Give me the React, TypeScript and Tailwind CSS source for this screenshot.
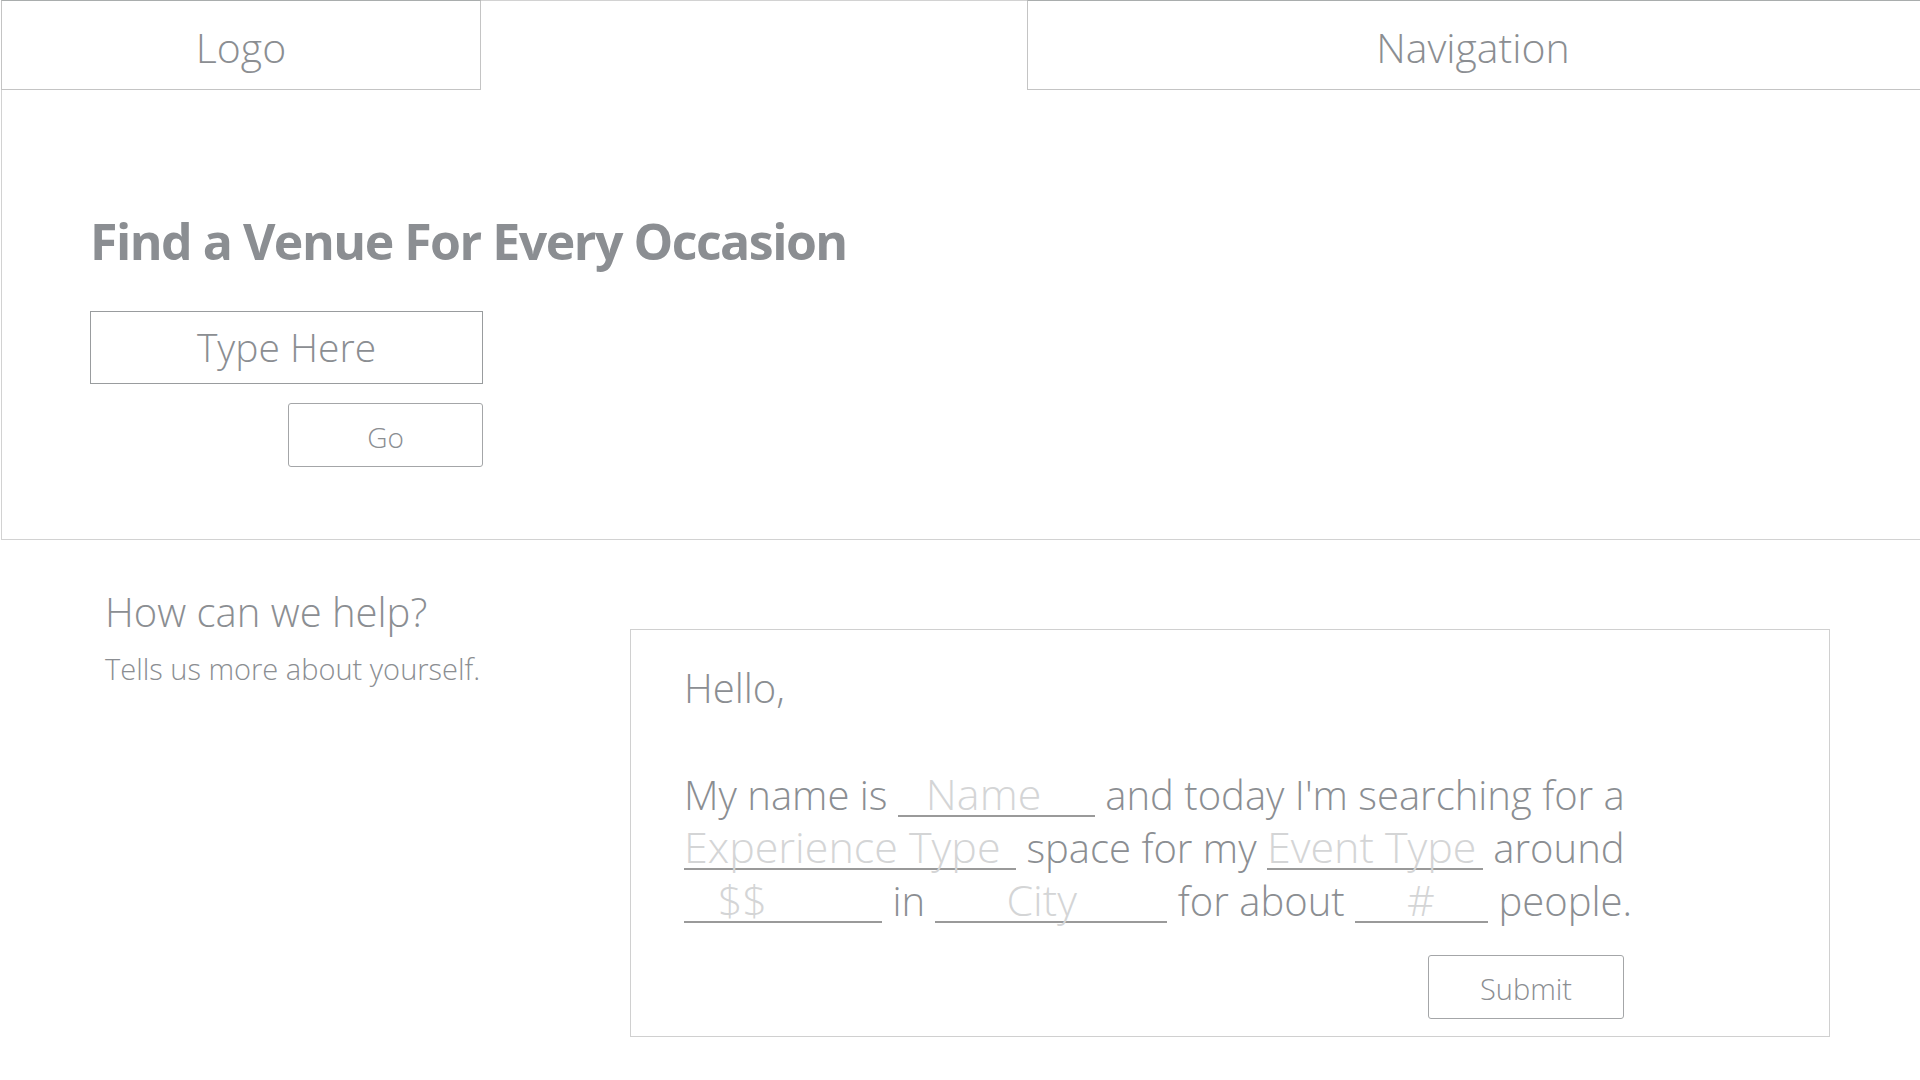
import React from 'react';

const font = { fontFamily: '"Open Sans", "Noto Sans", sans-serif' };

const Blank = ({ label, w, pad }: { label: string; w: string; pad: string }) => (
  <span className={`inline-block leading-none text-[43px] border-b-2 border-[#9a9a9a] text-[#d4d5d6] ${w} ${pad}`}>{label}</span>
);

export default function App() {
  return (
    <div className="w-[1920px] h-[1080px] bg-white text-[#8b8e92] overflow-hidden" style={font}>
      {/* Hero */}
      <section className="h-[540px] ml-[1px] w-[1930px] border border-[#d2d2d2]">
        <header className="flex justify-between -mt-px">
          <div className="w-[480px] h-[90px] -ml-px pt-[6px] border border-[#c4c4c4] border-t-[#a9adad] flex items-center justify-center text-[41px] font-light">
            Logo
          </div>
          <div className="w-[903px] h-[90px] pt-[6px] pr-[11px] border border-[#c4c4c4] border-t-[#a9adad] flex items-center justify-center text-[41px] font-light">
            Navigation
          </div>
        </header>

        <div className="pl-[88px] pt-[126px]">
          <h1 className="text-[50px] font-bold leading-none tracking-[-1.5px]">Find a Venue For Every Occasion</h1>
          <div className="mt-[45px] w-[393px] h-[73px] border border-[#999c9e] flex items-center justify-center text-[39px] font-light">
            Type Here
          </div>
          <div className="ml-[198px] mt-[19px] w-[195px] h-[64px] pt-[4px] border border-[#a4a6a8] rounded-[3px] flex items-center justify-center text-[28px] font-light">
            Go
          </div>
        </div>
      </section>

      {/* Help form */}
      <section className="flex">
        <div className="w-[630px] pl-[105px] pt-[47px]">
          <h2 className="text-[40px] font-light leading-tight">How can we help?</h2>
          <p className="mt-[17px] text-[29px] font-light leading-none">Tells us more about yourself.</p>
        </div>
        <div className="mt-[89px] w-[1200px] h-[408px] border border-[#d0d0d0] pl-[53px] pt-[38px]">
          <p className="text-[40px] font-light leading-none">Hello,</p>
          <p className="mt-[60px] text-[40px] font-light leading-[53px] w-[1000px]">
            My name is <Blank label="Name" w="w-[197px]" pad="pl-[28px]" /> and today I'm searching for a{' '}
            <Blank label="Experience Type" w="w-[332px]" pad="pl-0" /> space for my{' '}
            <Blank label="Event Type" w="w-[216px]" pad="pl-0" /> around{' '}
            <Blank label="$$" w="w-[198px]" pad="pl-[34px]" /> in{' '}
            <Blank label="City" w="w-[232px]" pad="pl-[71px]" /> for about{' '}
            <Blank label="#" w="w-[133px]" pad="pl-[52px]" /> people.
          </p>
          <div className="flex justify-end pr-[205px] mt-[28px]">
            <div className="w-[196px] h-[64px] pt-[4px] border border-[#a4a6a8] rounded-[3px] flex items-center justify-center text-[29px] font-light">
              Submit
            </div>
          </div>
        </div>
      </section>
    </div>
  );
}
